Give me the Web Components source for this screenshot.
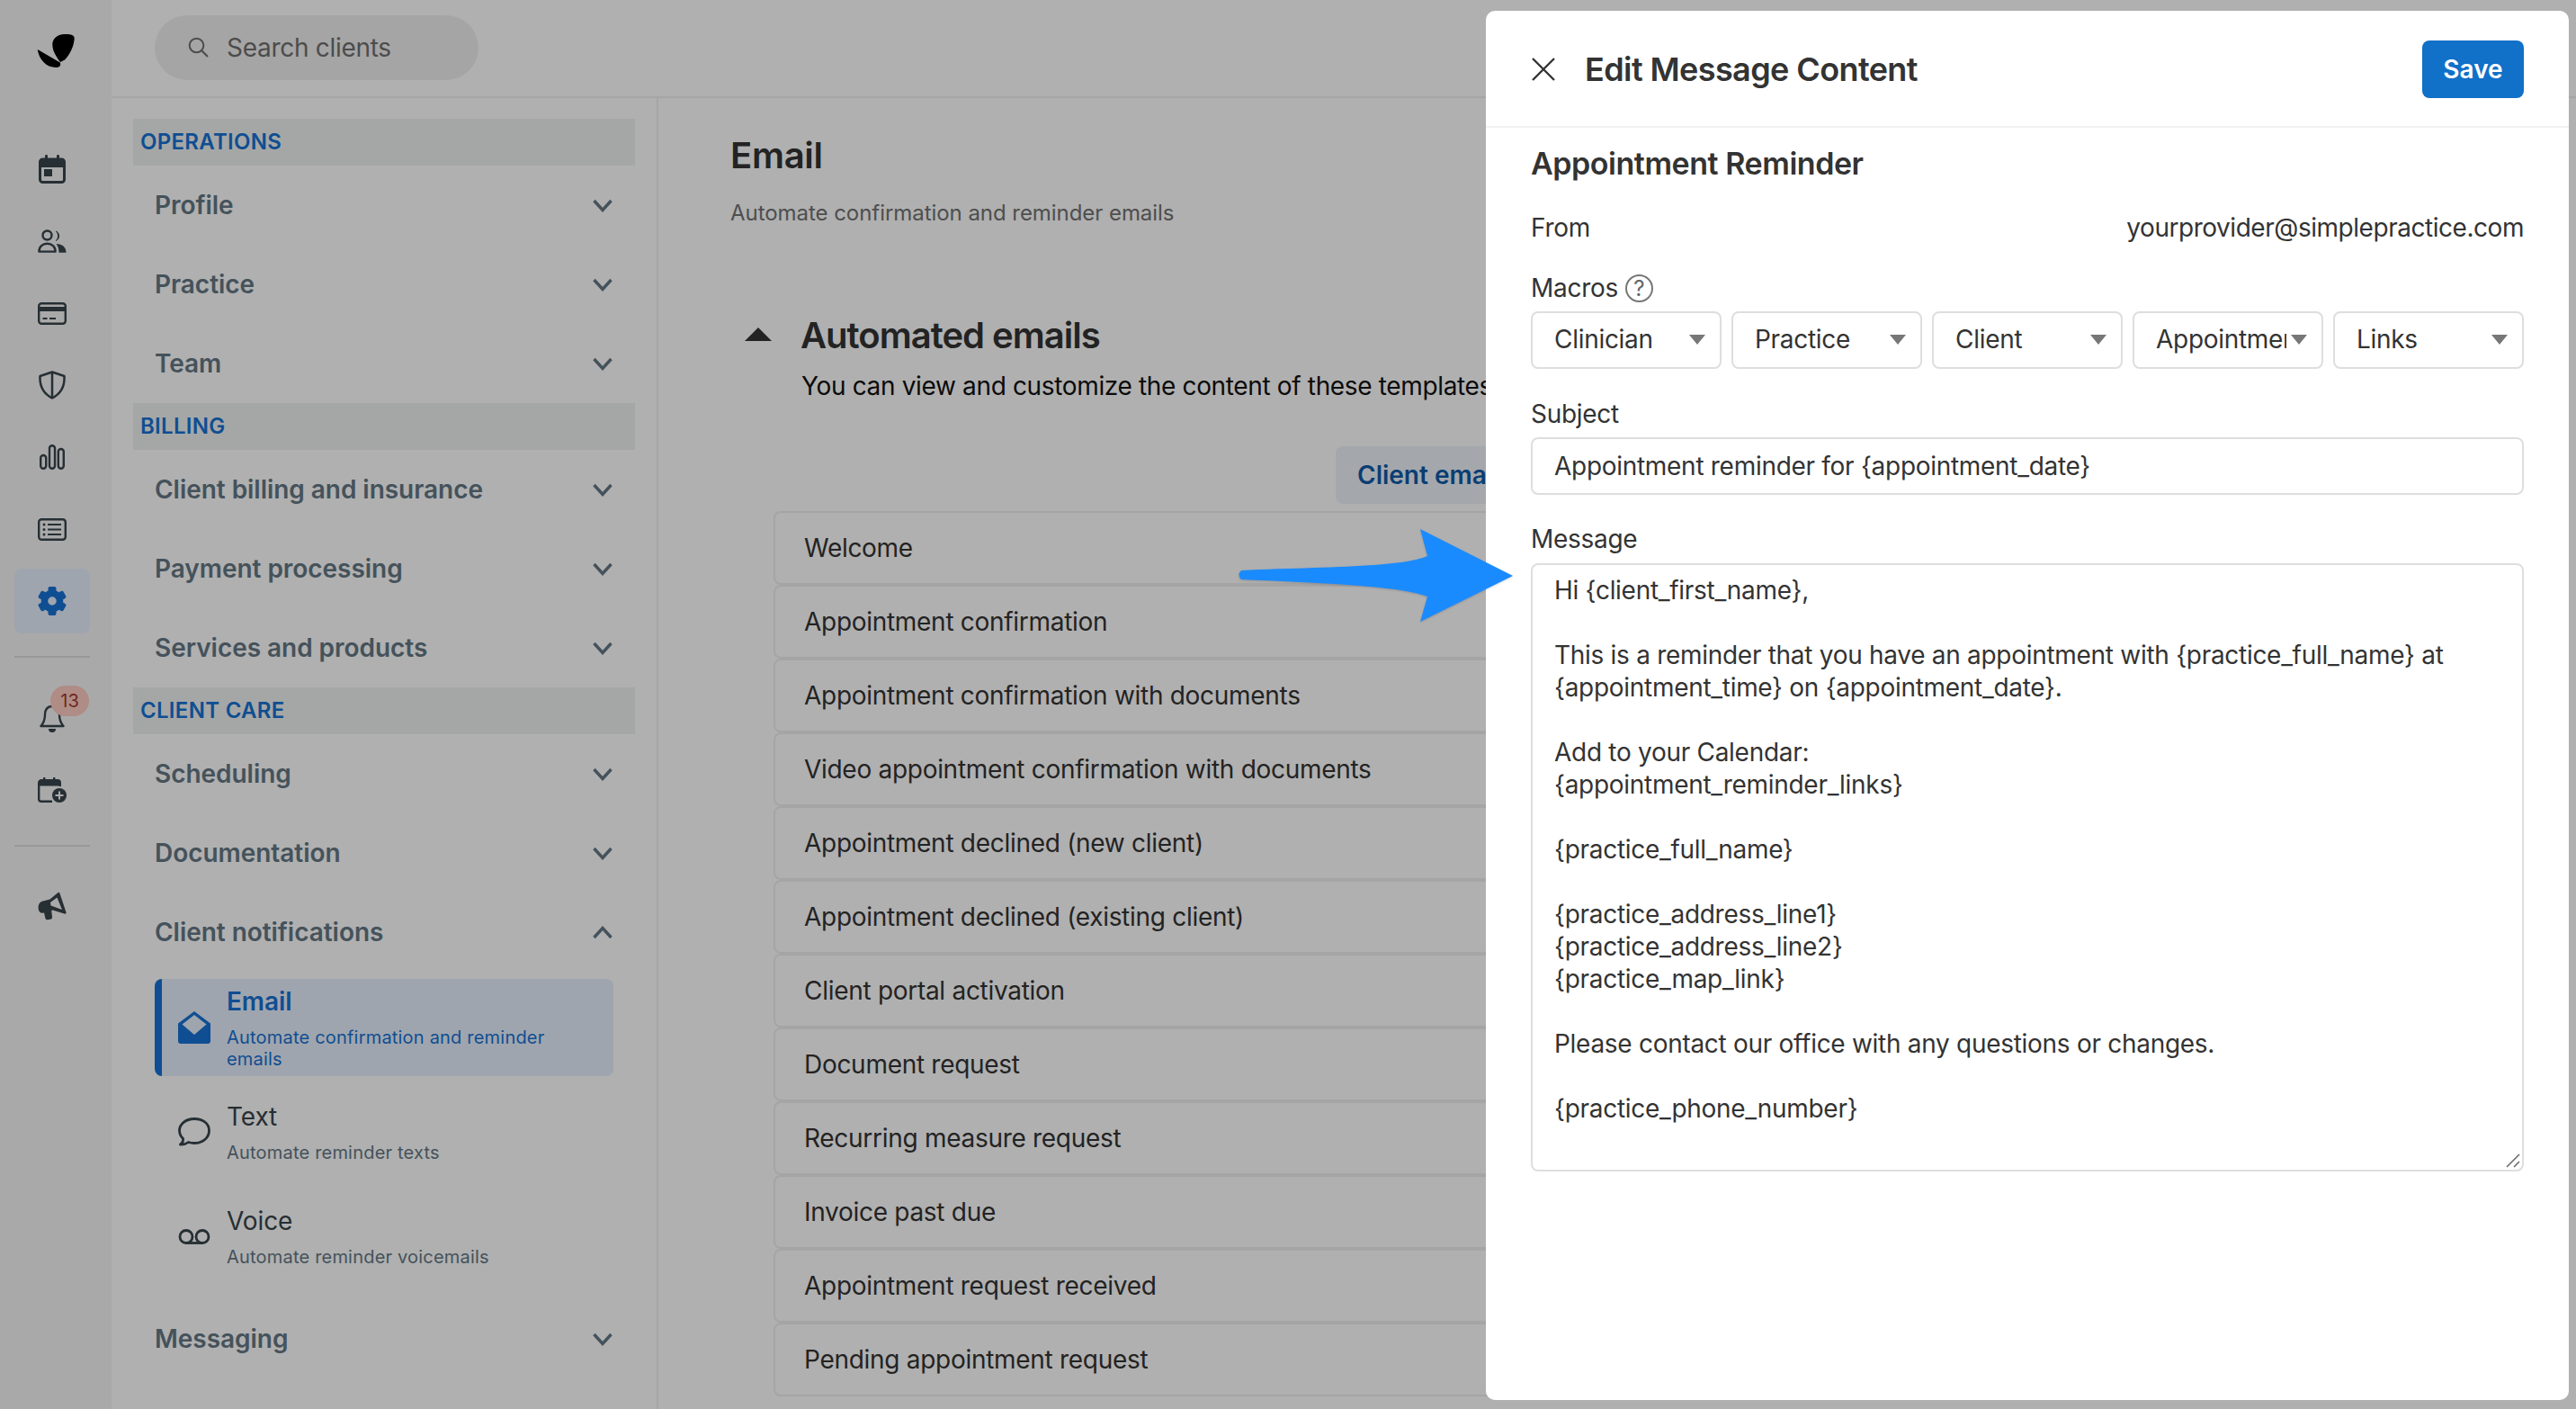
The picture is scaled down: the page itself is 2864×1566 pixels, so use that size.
<!DOCTYPE html>
<html lang="en"><head><meta charset="utf-8"><title>Edit Message Content</title>
<style>
html,body{margin:0;padding:0;width:2864px;height:1566px;overflow:hidden;background:#fff;font-family:Inter,"Liberation Sans",sans-serif}
</style></head>
<body>
<sp-app>
  <sp-rail></sp-rail>
  <sp-topbar slot="top"></sp-topbar>
  <sp-sidebar slot="side">
    <nav-section>OPERATIONS</nav-section>
    <nav-item>Profile</nav-item><nav-item>Practice</nav-item><nav-item>Team</nav-item>
    <nav-section>BILLING</nav-section>
    <nav-item>Client billing and insurance</nav-item><nav-item>Payment processing</nav-item><nav-item>Services and products</nav-item>
    <nav-section>CLIENT CARE</nav-section>
    <nav-item>Scheduling</nav-item><nav-item>Documentation</nav-item><nav-item open>Client notifications</nav-item>
    <nav-sub active icon="mail" title-text="Email">Automate confirmation and reminder emails</nav-sub>
    <nav-sub icon="chat" title-text="Text">Automate reminder texts</nav-sub>
    <nav-sub icon="voice" title-text="Voice">Automate reminder voicemails</nav-sub>
    <nav-item style="margin-top:16px">Messaging</nav-item>
  </sp-sidebar>
  <sp-main slot="main">
    <template-row>Welcome</template-row>
    <template-row>Appointment confirmation</template-row>
    <template-row>Appointment confirmation with documents</template-row>
    <template-row>Video appointment confirmation with documents</template-row>
    <template-row>Appointment declined (new client)</template-row>
    <template-row>Appointment declined (existing client)</template-row>
    <template-row>Client portal activation</template-row>
    <template-row>Document request</template-row>
    <template-row>Recurring measure request</template-row>
    <template-row>Invoice past due</template-row>
    <template-row>Appointment request received</template-row>
    <template-row>Pending appointment request</template-row>
  </sp-main>
  <sp-modal slot="over"></sp-modal>
  <blue-arrow slot="over"></blue-arrow>
</sp-app>
<script>
function def(name,css,html){
  customElements.define(name,class extends HTMLElement{
    connectedCallback(){
      if(this.shadowRoot)return;
      const r=this.attachShadow({mode:'open'});
      const h=typeof html==='function'?html(this):html;
      r.innerHTML='<style>'+css+'</style>'+h;
    }
  });
}
const ICON={
cal:'<svg width="30" height="32" viewBox="0 0 30 32"><rect x="1.5" y="5" width="27" height="25.5" rx="3" fill="none" stroke="currentColor" stroke-width="3"/><path d="M1 8a3 3 0 0 1 3-3h22a3 3 0 0 1 3 3v6H1z" fill="currentColor"/><rect x="7" y="0" width="3" height="6" rx="1.2" fill="currentColor"/><rect x="20" y="0" width="3" height="6" rx="1.2" fill="currentColor"/><rect x="6" y="16" width="9" height="8" fill="currentColor"/></svg>',
users:'<svg width="32" height="26" viewBox="0 0 32 26"><circle cx="10.500" cy="6.500" r="5" fill="none" stroke="currentColor" stroke-width="2.400"/><path d="M20.500 2a6 6 0 0 1 0 10.500 7.500 7.500 0 0 0 0-10.500z" fill="currentColor" stroke="currentColor" stroke-width="1"/><path d="M1.400 24.600c0-5.500 4-8.800 9.100-8.800s9.100 3.300 9.100 8.800z" fill="none" stroke="currentColor" stroke-width="2.400" stroke-linejoin="round"/><path d="M20.500 16c6.500 0 11 3.500 11 9.700H23.500c0-4-1-7.200-3-9.700z" fill="currentColor"/></svg>',
card:'<svg width="32" height="25" viewBox="0 0 32 25"><rect x="1.200" y="1.200" width="29.600" height="22.600" rx="3" fill="none" stroke="currentColor" stroke-width="2.400"/><rect x="1" y="5" width="30" height="5" fill="currentColor"/><rect x="5.500" y="17" width="5" height="2" fill="currentColor"/><rect x="13" y="17" width="7" height="2" fill="currentColor"/></svg>',
shield:'<svg width="30" height="32" viewBox="0 0 30 32"><path d="M15 1.500 28.500 6c.6 11-3.500 19.500-13.500 24.500C5 25.500.9 17 1.500 6z" fill="none" stroke="currentColor" stroke-width="2.500" stroke-linejoin="round"/><path d="M15 2v28" stroke="currentColor" stroke-width="2.500"/></svg>',
bars:'<svg width="28" height="28" viewBox="0 0 28 28"><rect x="1.200" y="12" width="6" height="14.800" rx="3" fill="none" stroke="currentColor" stroke-width="2.400"/><rect x="11" y="1.200" width="6" height="25.600" rx="3" fill="none" stroke="currentColor" stroke-width="2.400"/><rect x="20.800" y="5" width="6" height="21.800" rx="3" fill="none" stroke="currentColor" stroke-width="2.400"/></svg>',
list:'<svg width="32" height="25" viewBox="0 0 32 25"><rect x="1.200" y="1.200" width="29.600" height="22.600" rx="3" fill="none" stroke="currentColor" stroke-width="2.400"/><g fill="currentColor"><circle cx="7" cy="7" r="1.500"/><circle cx="7" cy="12.500" r="1.500"/><circle cx="7" cy="18" r="1.500"/><rect x="11" y="6" width="15" height="2"/><rect x="11" y="11.500" width="15" height="2"/><rect x="11" y="17" width="15" height="2"/></g></svg>',
gear:'<svg width="32" height="32" viewBox="-16 -16 32 32"><circle r="8.500" fill="none" stroke="currentColor" stroke-width="7.500"/><g fill="currentColor"><rect x="-4.500" y="-16" width="9" height="7" rx="2"/><rect x="-4.500" y="-16" width="9" height="7" rx="2" transform="rotate(60)"/><rect x="-4.500" y="-16" width="9" height="7" rx="2" transform="rotate(120)"/><rect x="-4.500" y="-16" width="9" height="7" rx="2" transform="rotate(180)"/><rect x="-4.500" y="-16" width="9" height="7" rx="2" transform="rotate(240)"/><rect x="-4.500" y="-16" width="9" height="7" rx="2" transform="rotate(300)"/></g></svg>',
bell:'<svg width="28" height="31" viewBox="0 0 28 31"><path d="M14 2C8.500 2 6 6 6 11c0 6-1.500 9.500-4.500 13h25c-3-3.500-4.500-7-4.500-13 0-5-2.500-9-8-9z" fill="none" stroke="currentColor" stroke-width="2.400" stroke-linejoin="round"/><path d="M10 27h8a4 4 0 0 1-8 0z" fill="currentColor"/></svg>',
calplus:'<svg width="32" height="28" viewBox="0 0 32 28"><path d="M16 26.800H4a2.800 2.800 0 0 1-2.800-2.800V6A2.800 2.800 0 0 1 4 3.200h18A2.800 2.800 0 0 1 24.800 6v4" fill="none" stroke="currentColor" stroke-width="2.400"/><path d="M1.500 5.500a3 3 0 0 1 3-3h17a3 3 0 0 1 3 3v4h-23z" fill="currentColor"/><rect x="6" y="0" width="2.400" height="4" fill="currentColor"/><rect x="17" y="0" width="2.400" height="4" fill="currentColor"/><circle cx="24" cy="20" r="8" fill="currentColor"/><path d="M24 15.500v9M19.500 20h9" stroke="#f5f5f5" stroke-width="2"/></svg>',
mega:'<svg width="32" height="32" viewBox="0 0 32 32"><path fill-rule="evenodd" d="M22 1.500c1-1 2-.8 2.500.5L31.500 23c.4 1.400-.6 2-2 1.500L16.500 20.500l-1.300.4L16 28c.3 1.500-.5 2.500-2 2.800l-3 .5c-1.300.2-2.300-.5-2.600-1.800L7 23.500l-2 .2C2 24 .6 20.500.6 17.500.6 14 2.500 11.500 5 10.800l8.500-2.300zM21.500 6.500 14 12l.5 3.500 12.500 4.500z" fill="currentColor"/></svg>',
mail:'<svg width="36" height="36" viewBox="0 0 36 36"><path fill-rule="evenodd" d="M18 0 36 13.500V33a3 3 0 0 1-3 3H3a3 3 0 0 1-3-3V13.500zM18 4 4.500 14.500 18 26l13.500-11.500z" fill="currentColor"/></svg>',
chat:'<svg width="36" height="32" viewBox="0 0 36 32"><path d="M18 1.500C8.500 1.500 1.500 7.500 1.500 14.500c0 3.500 1.500 6.500 4 9 .4 2.500-.8 5-3 6.500 4 .2 7-1 9-2.500 2 .6 4.300 1 6.500 1 9.500 0 16.500-6 16.500-14S27.500 1.500 18 1.500z" fill="none" stroke="currentColor" stroke-width="2.800" stroke-linejoin="round"/></svg>',
voice:'<svg width="36" height="17" viewBox="0 0 36 17"><circle cx="9" cy="8.500" r="7" fill="none" stroke="currentColor" stroke-width="2.800"/><circle cx="27" cy="8.500" r="7" fill="none" stroke="currentColor" stroke-width="2.800"/><path d="M9 15.500h18" stroke="currentColor" stroke-width="2.800"/></svg>'
};
def('sp-app',`:host{display:block;position:relative;width:2864px;height:1566px;overflow:hidden;background:#fff;color:#333}
.shell{display:flex;height:100%}.col{flex:1;min-width:0;display:flex;flex-direction:column}.low{flex:1;display:flex;min-height:0}
.scrim{position:absolute;inset:0;background:rgba(0,0,0,.31)}`,
`<div class="shell"><slot></slot><div class="col"><slot name="top"></slot><div class="low"><slot name="side"></slot><slot name="main"></slot></div></div></div><div class="scrim"></div><slot name="over"></slot>`);

def('rail-btn',`:host{display:flex;align-items:center;justify-content:center;position:relative;width:84px;height:72px;border-radius:8px;color:#37444a;flex:none}
:host([active]){background:#e6effc;color:#1672d4}
.b{position:absolute;left:40px;top:0;width:43px;height:34px;border-radius:17px;background:#ffcbc2;color:#9b3d2e;font:400 20px/34px Inter,sans-serif;text-align:center}`,
(e)=>ICON[e.getAttribute('icon')]+(e.hasAttribute('badge')?'<span class="b">'+e.getAttribute('badge')+'</span>':''));

def('sp-rail',`:host{display:flex;flex-direction:column;align-items:center;width:124px;flex:none;background:#f5f5f5;padding:37px 8px 0 0;box-sizing:border-box;gap:8px}
.logo{margin-bottom:69px;height:38px;display:block;margin-left:8px;flex:none}
.div{width:84px;height:2px;background:#dcdcdc;flex:none}
.d1{margin:17px 0 23px}.d2{margin:17px 0 22px}`,
`<svg class="logo" width="42" height="38" viewBox="0 0 42 38"><path d="M28 1.300C34 .9 42 .6 41.700 6 41 15 36.500 24 31 29.500l-5 2.500C22 26.500 17.500 20 17.300 13 17 7 22 1.900 28 1.300z" fill="#000"/><path d="M1.300 18.200c-.6.100-.6.500-.3 1.300C3 29 10 38 21.500 38c4 0 5.500-2.300 4.300-5.500z" fill="#000"/></svg>
<rail-btn icon="cal"></rail-btn><rail-btn icon="users"></rail-btn><rail-btn icon="card"></rail-btn><rail-btn icon="shield"></rail-btn><rail-btn icon="bars"></rail-btn><rail-btn icon="list"></rail-btn><rail-btn icon="gear" active></rail-btn>
<div class="div d1"></div><rail-btn icon="bell" badge="13"></rail-btn><rail-btn icon="calplus"></rail-btn><div class="div d2"></div><rail-btn icon="mega"></rail-btn>`);

def('sp-topbar',`:host{display:flex;align-items:center;height:109px;box-sizing:border-box;border-bottom:2px solid #f0f0f0;padding:0 0 2px 48px;flex:none}
.pill{display:flex;align-items:center;gap:20px;width:360px;height:72px;border-radius:36px;background:#f0f0f0;box-sizing:border-box;padding-left:37px;color:#6f6f6f;font:400 28px/36px Inter,sans-serif;letter-spacing:-.29px}
svg{flex:none}`,
`<div class="pill"><svg width="23" height="23" viewBox="0 0 23 23"><circle cx="9.500" cy="9.500" r="7.800" fill="none" stroke="#6f6f6f" stroke-width="2"/><path d="M15 15l7 7" stroke="#6f6f6f" stroke-width="2.200"/></svg><span>Search clients</span></div>`);

def('sp-sidebar',`:host{display:block;width:608px;flex:none;box-sizing:border-box;border-right:2px solid #f0f0f0;padding:23px 24px 0}`,`<slot></slot>`);
def('nav-section',`:host{display:block;height:52px;box-sizing:border-box;background:#eff2f1;color:#1672d4;font:600 24px/52px Inter,sans-serif;letter-spacing:.3px;padding-left:8px}`,`<slot></slot>`);
def('nav-item',`:host{display:flex;align-items:center;justify-content:space-between;height:88px;padding:0 25px 0 24px;color:#657885;font:600 28px/36px Inter,sans-serif;letter-spacing:-.04px}
svg{flex:none}`,(e)=>`<slot></slot><svg width="22" height="15" viewBox="0 0 22 15"><path d="${e.hasAttribute('open')?'M1.500 13 11 2.500 20.500 13':'M1.500 2 11 12.500 20.500 2'}" fill="none" stroke="#657885" stroke-width="3.400"/></svg>`);
def('nav-sub',`:host{display:flex;align-items:center;gap:18px;min-height:108px;margin:8px 24px 0;box-sizing:border-box;padding:0 24px 0 26px;border-radius:8px;color:#37444a}
:host([active]){background:#e6effc;color:#1672d4;border-left:8px solid #1672d4;padding-left:18px}
.ic{width:36px;flex:none;display:flex;justify-content:center}
.t{font:400 28px/36px Inter,sans-serif;display:block;letter-spacing:-.1px}
:host([active]) .t{font-weight:600}
.s{display:block;margin-top:10px;font:400 20px/24px Inter,sans-serif;letter-spacing:.2px;color:#657885}
:host([active]) .s{color:#1672d4}`,
(e)=>`<span class="ic">${ICON[e.getAttribute('icon')]}</span><span><span class="t">${e.getAttribute('title-text')}</span><span class="s"><slot></slot></span></span>`);

def('template-row',`:host{display:flex;align-items:center;height:82px;box-sizing:border-box;border:2px solid #efefef;border-radius:8px;padding-left:32px;margin-left:48px;color:#333;font:400 28px/36px Inter,sans-serif;letter-spacing:-.29px;background:#fff}`,`<slot></slot>`);
def('sp-main',`:host{display:block;flex:1;min-width:0;padding:40px 60px 0 80px;box-sizing:border-box;color:#333;overflow:hidden;height:1457px}
h1{margin:0;font:600 40px/48px Inter,sans-serif;letter-spacing:-.3px}
.sub{margin:24px 0 0;font:400 24px/32px Inter,sans-serif;color:#727272;letter-spacing:-.05px}
.head{display:flex;align-items:center;gap:32px;margin:96px 0 0 16px}
.head h2{margin:0;font:600 40px/48px Inter,sans-serif;letter-spacing:-1px}
.tri{width:0;height:0;border-left:15.500px solid transparent;border-right:15.500px solid transparent;border-bottom:15px solid #333;margin-top:-4px}
.desc{margin:14px 0 0 79px;font:400 28px/36px Inter,sans-serif;white-space:nowrap;color:#111;letter-spacing:-.35px}
.tabs{display:flex;margin:49px 0 8px 673px}
.tab{height:64px;padding:0 24px;border-radius:8px;background:#eef3f9;color:#0f5ba8;font:600 28px/64px Inter,sans-serif;white-space:nowrap}`,
`<h1>Email</h1><p class="sub">Automate confirmation and reminder emails</p>
<div class="head"><span class="tri"></span><h2>Automated emails</h2></div>
<p class="desc">You can view and customize the content of these templates</p>
<div class="tabs"><div class="tab">Client emails</div></div><slot></slot>`);

def('macro-select',`:host{display:flex;align-items:center;height:64px;box-sizing:border-box;border:2px solid #dedede;border-radius:8px;padding:0 0 2px 24px;color:#333;font:400 28px/36px Inter,sans-serif;letter-spacing:-.29px;min-width:0}
.l{width:145px;overflow:hidden;white-space:nowrap;flex:none}
.a{margin-left:5px;width:0;height:0;border-left:9.500px solid transparent;border-right:9.500px solid transparent;border-top:11px solid #777;flex:none}`,
`<span class="l"><slot></slot></span><span class="a"></span>`);

def('sp-modal',`:host{position:absolute;left:1652px;top:12px;width:1204px;height:1544px;background:#fff;border-radius:10px;display:block;color:#333;letter-spacing:-.29px}
header{display:flex;align-items:center;height:130px;box-sizing:border-box;border-bottom:2px solid #f1f1f1;padding:2px 50px 0;gap:32px}
h2{margin:0;flex:1;font:600 36px/40px Inter,sans-serif;color:#333;letter-spacing:-.6px}
.save{width:113px;height:64px;border-radius:8px;background:#1170c8;color:#fff;font:600 28px/64px Inter,sans-serif;text-align:center;letter-spacing:0}
.body{padding:20px 50px 0}
h3{margin:0;font:600 34px/40px Inter,sans-serif;color:#333;letter-spacing:-.45px}
.lab{font:400 28px/36px Inter,sans-serif;color:#333;display:flex;align-items:center;gap:8px}
.from{display:flex;justify-content:space-between;margin-top:33px;font:400 28px/36px Inter,sans-serif}
.from span+span{letter-spacing:-.46px}
.q{width:27px;height:27px;border:2px solid #777;border-radius:50%;display:inline-block;text-align:center;font:400 24px/27px Inter,sans-serif;color:#666;letter-spacing:0}
.macros{display:grid;grid-template-columns:repeat(5,1fr);gap:11px;margin-top:8px}
.input{height:64px;box-sizing:border-box;margin-top:8px;border:2px solid #dedede;border-radius:8px;padding:0 24px;font:400 28px/60px Inter,sans-serif}
.ta{position:relative;height:676px;box-sizing:border-box;margin-top:9px;border:2px solid #dedede;border-radius:8px;padding:10px 24px;font:400 28px/36px Inter,sans-serif;white-space:pre-wrap}
.grip{position:absolute;right:2px;bottom:2px}`,
`<header><svg width="28" height="28" viewBox="0 0 28 28"><path d="M2 2l24 24M26 2 2 26" stroke="#333" stroke-width="2.400"/></svg><h2>Edit Message Content</h2><div class="save">Save</div></header>
<div class="body"><h3>Appointment Reminder</h3>
<div class="from"><span>From</span><span>yourprovider@simplepractice.com</span></div>
<div class="lab" style="margin-top:31px">Macros <span class="q">?</span></div>
<div class="macros"><macro-select>Clinician</macro-select><macro-select>Practice</macro-select><macro-select>Client</macro-select><macro-select>Appointment</macro-select><macro-select>Links</macro-select></div>
<div class="lab" style="margin-top:32px">Subject</div>
<div class="input">Appointment reminder for {appointment_date}</div>
<div class="lab" style="margin-top:31px">Message</div>
<div class="ta">Hi {client_first_name},

This is a reminder that you have an appointment with {practice_full_name} at
{appointment_time} on {appointment_date}.

Add to your Calendar:
{appointment_reminder_links}

{practice_full_name}

{practice_address_line1}
{practice_address_line2}
{practice_map_link}

Please contact our office with any questions or changes.

{practice_phone_number}<svg class="grip" width="16" height="16" viewBox="0 0 16 16"><path d="M1 15 15 1M9 15l6-6" stroke="#666" stroke-width="1.500"/></svg></div></div>`);

def('blue-arrow',`:host{position:absolute;left:1375px;top:588px;width:308px;height:104px;display:block}svg{display:block;filter:drop-shadow(0 1px 1px rgba(0,0,0,.15))}`,
`<svg width="308" height="104" viewBox="0 0 308 104"><path d="M5 46C92 42 182 43 212 30L204 0 307 52 204 103 212 75C182 63 92 60 5 56Q0 51 5 46Z" fill="#1a8bff"/></svg>`);
</script>
</body></html>
